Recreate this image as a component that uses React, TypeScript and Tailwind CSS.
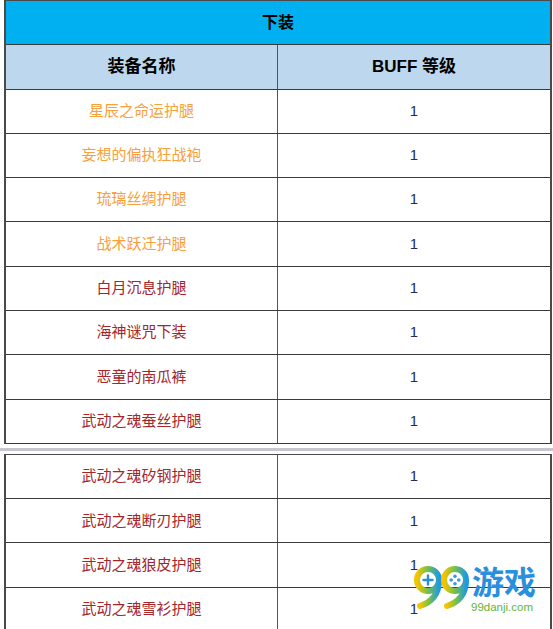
const orange = 'text-[#f7a03c]'
const red = 'text-[#a3262b]'

const top = [
  { name: '星辰之命运护腿', color: orange },
  { name: '妄想的偏执狂战袍', color: orange },
  { name: '琉璃丝绸护腿', color: orange },
  { name: '战术跃迁护腿', color: orange },
  { name: '白月沉息护腿', color: red },
  { name: '海神谜咒下装', color: red },
  { name: '恶童的南瓜裤', color: red },
  { name: '武动之魂蚕丝护腿', color: red },
]

const bottom = [
  { name: '武动之魂矽钢护腿', color: red },
  { name: '武动之魂断刃护腿', color: red },
  { name: '武动之魂狼皮护腿', color: red },
  { name: '武动之魂雪衫护腿', color: red },
]

function Row({ name, color }: { name: string; color: string }) {
  return (
    <div className="flex h-[44.3px] border-b border-[#3a3a3a] bg-white text-[15px]">
      <div className={`flex w-[272px] items-center justify-center border-r border-[#555] ${color}`}>
        {name}
      </div>
      <div className="flex flex-1 items-center justify-center text-[#1e2f5c]">1</div>
    </div>
  )
}

function Logo() {
  return (
    <div className="absolute left-[412px] top-[560px] h-[56px] w-[135px]">
      <svg width="64" height="50" viewBox="0 0 64 50" className="absolute left-0 top-0">
        <defs>
          <linearGradient id="g99" x1="0" y1="0" x2="1" y2="0">
            <stop offset="0" stopColor="#f7c400" />
            <stop offset="0.45" stopColor="#7dc243" />
            <stop offset="1" stopColor="#1f9ae0" />
          </linearGradient>
        </defs>
        <g fill="none" stroke="url(#g99)" strokeWidth="6" strokeLinecap="round">
          <circle cx="16" cy="20" r="11" />
          <path d="M27 22 Q26 40 8 46" />
          <circle cx="43" cy="20" r="11" />
          <path d="M54 22 Q53 40 35 46" />
        </g>
        <g stroke="#2b8fd8" strokeWidth="2.4" strokeLinecap="round">
          <path d="M11.5 20 H20.5 M16 15.5 V24.5" />
        </g>
        <g fill="#3a9ad8">
          <circle cx="43" cy="16.2" r="1.8" />
          <circle cx="43" cy="23.8" r="1.8" />
          <circle cx="39.2" cy="20" r="1.8" />
          <circle cx="46.8" cy="20" r="1.8" />
        </g>
      </svg>
      <div className="absolute left-[60px] top-[7px] text-[32px] font-bold leading-none text-[#2a8fdd]">
        游戏
      </div>
      <div className="absolute left-[59px] top-[42px] text-[11.5px] leading-none text-[#63b33a]">
        99danji.com
      </div>
    </div>
  )
}

export default function App() {
  return (
    <div
      className="relative h-[629px] w-[553px] overflow-hidden bg-white"
      style={{ fontFamily: '"Liberation Sans", "Noto Sans CJK SC", sans-serif' }}
    >
      <div className="ml-[4px] w-[548px] border-x-2 border-t border-[#4a4a4a]">
        <div className="flex h-[44px] items-center justify-center border-b border-[#3a3a3a] bg-[#00b0f0] text-[16px] font-bold text-black">
          下装
        </div>
        <div className="flex h-[44.5px] border-b border-[#3a3a3a] bg-[#bdd7ee] text-[17px] font-bold text-black">
          <div className="flex w-[272px] items-center justify-center border-r border-[#555]">装备名称</div>
          <div className="flex flex-1 items-center justify-center">BUFF 等级</div>
        </div>
        {top.map((r) => (
          <Row key={r.name} {...r} />
        ))}
      </div>

      <div className="mt-[4px] h-[3px] w-full bg-[#c6c6ce]" />

      <div className="mt-[3px] ml-[4px] w-[548px] border-x-2 border-t border-[#4a4a4a]">
        {bottom.map((r) => (
          <Row key={r.name} {...r} />
        ))}
      </div>

      <Logo />
    </div>
  )
}
